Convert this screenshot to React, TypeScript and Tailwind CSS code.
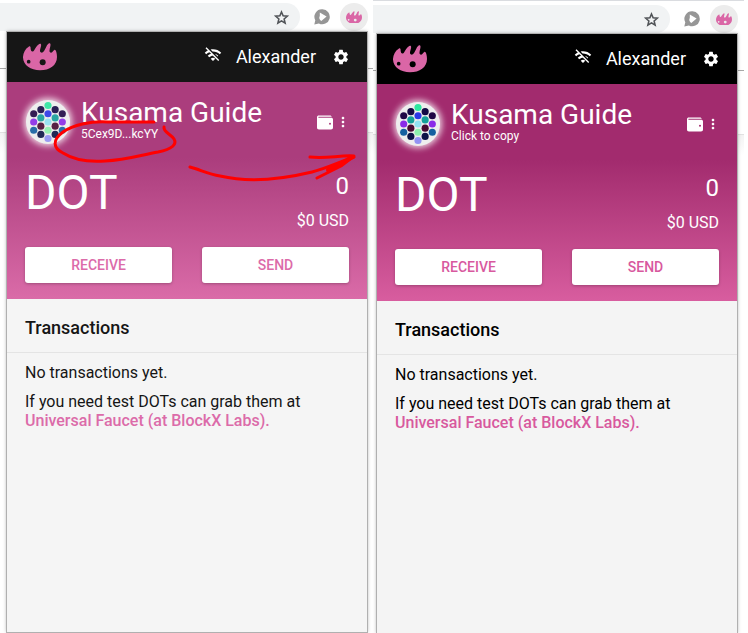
import React from "react";
import { MdSettings, MdMoreVert } from "react-icons/md";

const bright = {
  header: "bg-black",
  hero: "bg-linear-to-b from-[#a22b6e] from-35% to-[#d85d9f]",
  body: "bg-[#f4f4f4] text-black",
  accent: "text-[#d8599e]",
  eyes: "fill-black",
  dots: "opacity-100",
};

const faded = {
  header: "bg-[#161616]",
  hero: "bg-linear-to-b from-[#ab3d7d] from-35% to-[#da6ba8]",
  body: "bg-[#f5f5f5] text-[#161616]",
  accent: "text-[#dc6ba9]",
  eyes: "fill-[#161616]",
  dots: "opacity-90",
};

type Theme = typeof bright;

function Creature({ className, eyes }: { className: string; eyes: string }) {
  return (
    <svg viewBox="0 0 102 82" className={className} aria-hidden="true">
      <path
        fill="#da66a6"
        d="M0 41C1 29 7 17 17 11C22 8 23 12 23 18C24 27 30 28 34 21C38 14 43 6 49 3C54 0 55 4 54 10C52 18 49 25 53 28C59 32 63 25 66 19C70 12 73 3 78 1C83 0 83 4 82 10C80 18 78 25 81 28C86 32 89 25 94 21C99 18 102 33 102 42C102 67 80 82 51 82C22 82-1 66 0 41Z"
      />
      <circle cx="17" cy="56" r="5.5" className={eyes} />
      <circle cx="59" cy="58" r="9" className={eyes} />
    </svg>
  );
}

const identicon: [number, number, string][] = [
  [32, 8, "#2ee8a0"],
  [32, 20, "#2b36e8"],
  [32, 32, "#92e2f2"],
  [32, 44, "#8df2ae"],
  [32, 56, "#9292f4"],
  [21.6, 14, "#150a45"],
  [42.4, 14, "#150a45"],
  [21.6, 26, "#14a09b"],
  [42.4, 26, "#14a09b"],
  [21.6, 38, "#470a32"],
  [42.4, 38, "#470a32"],
  [21.6, 50, "#0c1446"],
  [42.4, 50, "#0c1446"],
  [11.2, 20, "#1f0845"],
  [52.8, 20, "#1f0845"],
  [11.2, 32, "#8a2be8"],
  [52.8, 32, "#8a2be8"],
  [11.2, 44, "#1460a0"],
  [52.8, 44, "#1460a0"],
];

function Identicon({ className }: { className: string }) {
  return (
    <div className="size-11 shrink-0 rounded-full bg-[#eeeeee] shadow-[0_0_6px_2px_#ffffffcc]">
      <svg viewBox="0 0 64 64" className={`size-11 ${className}`} aria-hidden="true">
        {identicon.map(([x, y, fill]) => (
          <circle key={`${x}-${y}`} cx={x} cy={y} r="5.2" fill={fill} />
        ))}
      </svg>
    </div>
  );
}

function Star() {
  return (
    <svg viewBox="0 0 24 24" className="size-[17px]" fill="none" stroke="currentColor" strokeWidth="2.2" aria-hidden="true">
      <path d="M12 4.200L14.300 9.700L20.200 10.200L15.700 14.100L17.100 19.900L12 16.800L6.900 19.900L8.300 14.100L3.800 10.200L9.700 9.700Z" />
    </svg>
  );
}

function WifiOff() {
  return (
    <svg viewBox="0 0 24 24" className="size-[18px]" fill="currentColor" aria-hidden="true">
      <path d="M22.99 9C19.15 5.16 13.8 3.76 8.84 4.78l2.52 2.52c3.47-.17 6.99 1.05 9.63 3.7l2-2zm-4 4c-1.29-1.29-2.84-2.13-4.49-2.56l3.53 3.53.96-.97zM2 3.05 5.07 6.1C3.6 6.82 2.22 7.78 1 9l1.99 2c1.24-1.24 2.67-2.16 4.2-2.77l2.24 2.24C7.81 10.89 6.27 11.73 5 13v.01L6.99 15c1.36-1.36 3.14-2.04 4.92-2.06L18.98 20l1.27-1.26L3.29 1.79 2 3.05zM9 17l3 3 3-3c-1.65-1.66-4.34-1.66-6 0z" />
    </svg>
  );
}

function WalletIcon() {
  return (
    <svg viewBox="0 0 48 44" className="h-[15px] w-4" fill="currentColor" aria-hidden="true">
      <path d="M6 1H38C42 1 44 3 44 5H5C3.500 5 3.500 7.500 5 7.500H42C46 7.500 48 9.500 48 13V37C48 41 46 43 42 43H6C2 43 0 41 0 37V7C0 3 2 1 6 1ZM39 23a3 3 0 1 0 0 6a3 3 0 0 0 0-6Z" fillRule="evenodd" />
    </svg>
  );
}

function Toolbar() {
  return (
    <div className="flex h-7 items-center">
      <div className="flex h-7 flex-1 items-center justify-end rounded-r-full bg-[#f1f3f4] pr-2.5">
        <button aria-label="Bookmark" className="text-[#505357]">
          <Star />
        </button>
      </div>
      <button aria-label="Player" className="ml-3.5 text-[#969696]">
        <svg viewBox="0 0 16 16" className="size-4" aria-hidden="true">
          <path fill="currentColor" d="M8.500 .3a7.500 7.500 0 1 1-3.600 14.200L.3 15.500l1-4.200A7.500 7.500 0 0 1 8.500 .3Z" />
          <path fill="#fff" d="M5.800 3.500v3.500a3.500 3.500 0 0 0 1.500 5L12.600 7.500Z" />
        </svg>
      </button>
      <button aria-label="Wallet extension" className="ml-2.5 flex size-7 items-center justify-center rounded-full bg-[#ececec]">
        <Creature className="w-4" eyes="fill-[#ececec]" />
      </button>
    </div>
  );
}

function Wallet({ theme, hint, className }: { theme: Theme; hint: string; className: string }) {
  return (
    <section className={`flex flex-col shadow-[0_0_4px_#00000066] outline outline-[#b0b0b0] ${theme.body} ${className}`}>
      <header className={`flex h-[50px] items-center pr-[15px] pl-4 text-white ${theme.header}`}>
        <Creature className="w-[34px]" eyes={theme.eyes} />
        <div className="ml-auto flex items-center">
          <span className="mb-1">
            <WifiOff />
          </span>
          <span className="ml-3.5 text-lg">Alexander</span>
          <button aria-label="Settings" className="ml-4 mr-0.5">
            <MdSettings className="size-[18px]" />
          </button>
        </div>
      </header>
      <div className={`px-[18px] pb-4 pt-3.5 text-white ${theme.hero}`}>
        <div className="flex h-[52px] items-center">
          <div className="ml-px">
            <Identicon className={theme.dots} />
          </div>
          <div className="ml-[11px] pb-1.5">
            <h1 className="text-[28px] leading-[30px]">Kusama Guide</h1>
            <p className="text-xs leading-3">{hint}</p>
          </div>
          <button aria-label="Accounts" className="ml-auto">
            <WalletIcon />
          </button>
          <button aria-label="More" className="ml-0.5 -mr-0.5">
            <MdMoreVert className="size-4" />
          </button>
        </div>
        <div className="mt-[15px] flex h-[72px] justify-between">
          <span className="text-5xl leading-[60px]">DOT</span>
          <div className="text-right">
            <p className="text-2xl leading-[46px]">0</p>
            <p className="text-base leading-6">$0 USD</p>
          </div>
        </div>
        <div className="mt-3 flex gap-[30px]">
          {["RECEIVE", "SEND"].map((label) => (
            <button
              key={label}
              className={`h-9 flex-1 rounded-[3px] bg-white text-sm font-medium shadow-[0_1px_3px_#00000040] ${theme.accent}`}
            >
              {label}
            </button>
          ))}
        </div>
      </div>
      <h2 className="border-b border-[#e4e4e4] px-[18px] pt-4 pb-3 text-lg leading-[25px] font-medium">Transactions</h2>
      <div className="px-[18px] pt-2.5 text-base leading-[19px]">
        <p>No transactions yet.</p>
        <p className="mt-2.5">
          If you need test DOTs can grab them at
          <br />
          <a href="#faucet" className={`font-medium ${theme.accent}`}>
            Universal Faucet (at BlockX Labs).
          </a>
        </p>
      </div>
    </section>
  );
}

function Backdrop({ className }: { className: string }) {
  return (
    <div className={`absolute inset-x-0 bottom-0 -z-10 ${className}`}>
      <div className="h-[38px] border-b border-[#a8a8a8]" />
      <div className="h-16 border-b border-[#e2e2e2]" />
      <div className="h-5 bg-linear-to-b from-[#f3f3f3] to-white" />
    </div>
  );
}

export default function App() {
  return (
    <main className="relative grid min-h-screen grid-cols-[373fr_375fr] overflow-hidden bg-white font-['Roboto',sans-serif]">
      <div className="relative isolate flex flex-col pt-[3px] pb-px">
        <Backdrop className="top-[31px]" />
        <div className="pr-[5px]">
          <Toolbar />
        </div>
        <Wallet theme={faded} hint="5Cex9D...kcYY" className="mt-px mr-1.5 ml-[7px] flex-1" />
      </div>
      <div className="relative isolate mr-1 flex flex-col border-t border-[#dadce0] pt-1">
        <Backdrop className="top-8" />
        <div className="pr-1.5">
          <Toolbar />
        </div>
        <Wallet theme={bright} hint="Click to copy" className="mt-px mr-[7px] ml-1 flex-1" />
      </div>
      <svg
        viewBox="0 0 320 80"
        className="pointer-events-none absolute top-[110px] left-[50px] h-20 w-80"
        fill="none"
        stroke="#ff0000"
        strokeWidth="3"
        strokeLinecap="round"
        strokeLinejoin="round"
        aria-hidden="true"
      >
        <path d="M104 12H58C40 11 23 15 13 22C2 30 3 38 13 43C24 50 41 52 55 51C76 50 91 45 108 42C123 39 127 34 124 29C121 24 113 22 114 17" />
        <path d="M140 57C151 60 158 64 170 66C200 73 233 69 262 62C275 59 287 53 304 47M260 47C276 49 290 45 304 46L291 56L267 68" />
        <path strokeWidth="4" d="M303 47L278 60" />
      </svg>
    </main>
  );
}
